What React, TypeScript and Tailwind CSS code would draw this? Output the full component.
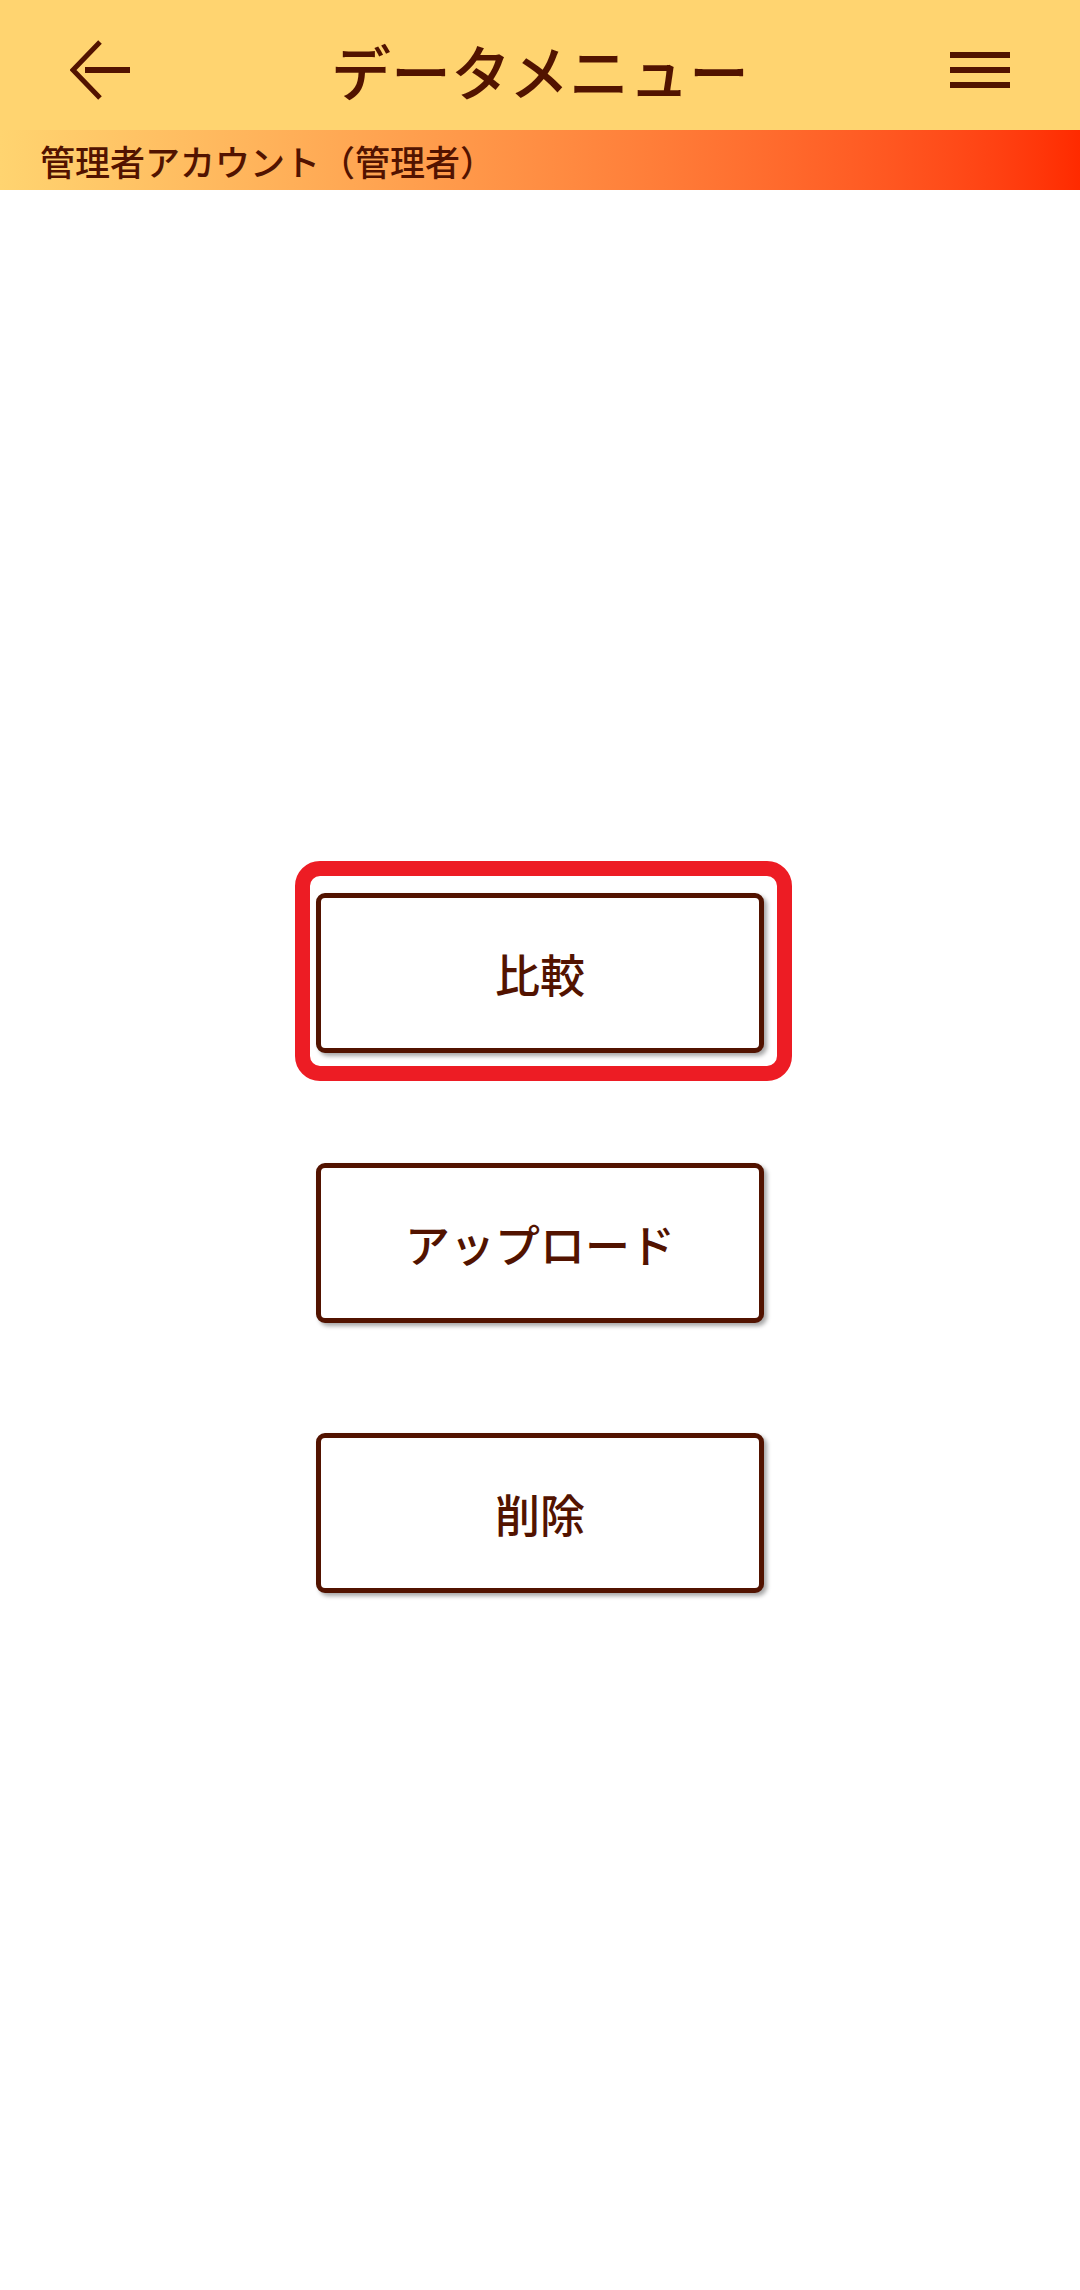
import React from 'react';

const font = { fontFamily: '"Noto Sans CJK JP", "Noto Sans", sans-serif' };

const MenuButton = ({ label }: { label: string }) => (
  <button className="w-[448px] h-[160px] bg-white border-[5px] border-[#521300] rounded-[9px] shadow-[3px_3px_4px_rgba(0,0,0,0.35)] flex items-center justify-center text-[45px] font-medium text-[#521300] leading-none">
    {label}
  </button>
);

const App = () => {
  return (
    <div className="w-[1080px] min-h-[2290px] bg-white text-[#521300]" style={font}>
      <header className="h-[130px] bg-[#FFD470] flex items-center justify-between px-[70px] pt-[10px]">
        <svg width="60" height="60" viewBox="0 0 60 60" fill="none">
          <polyline points="30,2 3,30 30,58" stroke="#521300" strokeWidth="5" strokeLinejoin="miter" />
          <line x1="15" y1="30" x2="60" y2="30" stroke="#521300" strokeWidth="6" />
        </svg>
        <h1 className="text-[60px] font-medium leading-none">データメニュー</h1>
        <div className="w-[60px] flex flex-col gap-[9px]">
          <span className="block h-[6px] bg-[#521300]" />
          <span className="block h-[6px] bg-[#521300]" />
          <span className="block h-[6px] bg-[#521300]" />
        </div>
      </header>

      <div className="h-[60px] flex items-center pl-[40px] bg-gradient-to-r from-[#FFD470] to-[#FF2A00]">
        <span className="text-[35px] font-medium leading-none">管理者アカウント（管理者）</span>
      </div>

      <main className="flex flex-col items-center pt-[703px] gap-[110px]">
        <div className="relative">
          <div className="absolute -top-[32px] -left-[21px] -right-[28px] -bottom-[28px] border-[15px] border-[#ED1C24] rounded-[25px] pointer-events-none" />
          <MenuButton label="比較" />
        </div>
        <MenuButton label="アップロード" />
        <MenuButton label="削除" />
      </main>
    </div>
  );
};

export default App;
